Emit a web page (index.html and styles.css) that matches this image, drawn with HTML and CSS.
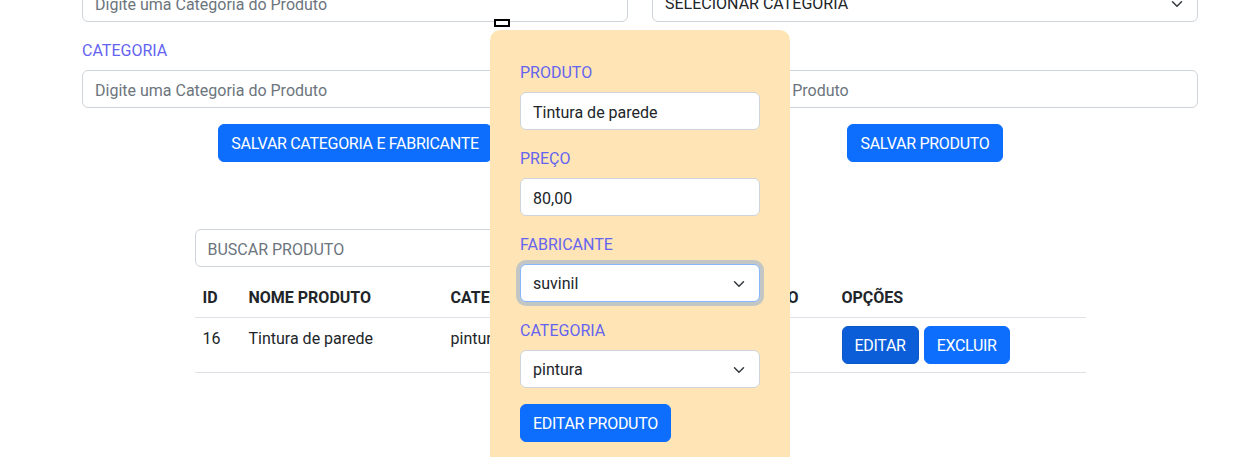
FILE: index.html
```html
<!DOCTYPE html>
<html lang="pt-BR">
<head>
<meta charset="utf-8">
<title>Produtos</title>
<link rel="stylesheet" href="styles.css">
</head>
<body>
<div class="page">
  <div class="container">
    <div class="forms">
      <div class="col">
        <label class="lbl">FABRICANTE</label>
        <input class="field" type="text" placeholder="Digite uma Categoria do Produto">
        <label class="lbl">CATEGORIA</label>
        <input class="field" type="text" placeholder="Digite uma Categoria do Produto">
        <div class="actions"><button class="btn">SALVAR CATEGORIA E FABRICANTE</button></div>
      </div>
      <div class="col">
        <label class="lbl">CATEGORIA</label>
        <div class="field select"><span>SELECIONAR CATEGORIA</span><svg class="chev" viewBox="0 0 16 16" width="12" height="12"><path d="M2 5l6 6 6-6" fill="none" stroke="#343a40" stroke-width="2" stroke-linecap="round" stroke-linejoin="round"/></svg></div>
        <label class="lbl">PRODUTO</label>
        <input class="field" type="text" placeholder="Digite o Nome do Produto">
        <div class="actions"><button class="btn">SALVAR PRODUTO</button></div>
      </div>
    </div>

    <div class="list">
      <input class="field search" type="text" placeholder="BUSCAR PRODUTO">
      <table class="table">
        <colgroup>
          <col class="c-id"><col class="c-nome"><col class="c-cat"><col class="c-fab"><col class="c-preco"><col class="c-op">
        </colgroup>
        <thead>
          <tr><th>ID</th><th>NOME PRODUTO</th><th>CATEGORIA</th><th>FABRICANTE</th><th>PREÇO</th><th>OPÇÕES</th></tr>
        </thead>
        <tbody>
          <tr>
            <td>16</td><td>Tintura de parede</td><td>pintura</td><td>suvinil</td><td>80,00</td>
            <td><div class="row-actions"><button class="btn btn-hover">EDITAR</button><button class="btn">EXCLUIR</button></div></td>
          </tr>
        </tbody>
      </table>
    </div>
  </div>

  <span class="marker"></span>

  <div class="modal">
    <label class="lbl">PRODUTO</label>
    <input class="field" type="text" value="Tintura de parede">
    <label class="lbl">PREÇO</label>
    <input class="field" type="text" value="80,00">
    <label class="lbl">FABRICANTE</label>
    <div class="field select focus"><span>suvinil</span><svg class="chev" viewBox="0 0 16 16" width="12" height="12"><path d="M2 5l6 6 6-6" fill="none" stroke="#343a40" stroke-width="2" stroke-linecap="round" stroke-linejoin="round"/></svg></div>
    <label class="lbl">CATEGORIA</label>
    <div class="field select"><span>pintura</span><svg class="chev" viewBox="0 0 16 16" width="12" height="12"><path d="M2 5l6 6 6-6" fill="none" stroke="#343a40" stroke-width="2" stroke-linecap="round" stroke-linejoin="round"/></svg></div>
    <div class="modal-actions"><button class="btn">EDITAR PRODUTO</button></div>
  </div>
</div>
</body>
</html>
```

FILE: styles.css
```css
* { box-sizing: border-box; }
html, body { margin: 0; padding: 0; height: 100%; overflow: hidden; background: #fff; }
body {
  font-family: "Segoe UI", Roboto, "Liberation Sans", sans-serif;
  font-size: 16px;
  line-height: 1.5;
  color: #212529;
}
.page {
  position: relative;
  display: flow-root;
  width: 1240px;
  height: 457px;
  overflow: hidden;
}
.container {
  width: 1116px;
  margin: -48px 0 0 82px;
}
.forms {
  display: grid;
  grid-template-columns: 546px 546px;
  column-gap: 24px;
}
.col { display: flex; flex-direction: column; }
.lbl {
  display: block;
  color: #6464f0;
  line-height: 24px;
  padding-top: 1px;
  margin-bottom: 7px;
}
.field {
  display: block;
  width: 100%;
  height: 38px;
  padding: 7px 12px 5px;
  font: inherit;
  line-height: 24px;
  color: #212529;
  background: #fff;
  border: 1px solid #ced4da;
  border-radius: 6px;
  margin: 0 0 16px 0;
  outline: none;
}
.field::placeholder { color: #6c757d; opacity: 1; }
.select {
  display: flex;
  align-items: center;
  justify-content: space-between;
}
.chev { flex: none; margin-right: 2px; }
.focus {
  border-color: #86b7fe;
  box-shadow: 0 0 0 4px rgba(13, 110, 253, .25);
}
.actions { display: flex; justify-content: center; }
.btn {
  font: inherit;
  line-height: 24px;
  letter-spacing: -0.3px;
  padding: 7px 12px 5px;
  color: #fff;
  background: #0d6efd;
  border: 1px solid #0d6efd;
  border-radius: 6px;
  cursor: pointer;
}
.btn-hover { background: #0b5ed7; border-color: #0a58ca; }

.list {
  width: 891px;
  margin: 67px auto 0;
}
.search {
  width: 400px;
  margin-bottom: 10px;
}
.table {
  width: 100%;
  border-collapse: collapse;
  table-layout: fixed;
}
.c-id { width: 46px; }
.c-nome { width: 202px; }
.c-cat { width: 150px; }
.c-fab { width: 147px; }
.c-preco { width: 94px; }
.c-op { width: 252px; }
.table th, .table td {
  text-align: left;
  vertical-align: top;
  padding: 9px 8px 7px;
  border-bottom: 1px solid #dee2e6;
  white-space: nowrap;
}
.table td { padding: 8px; }
.table td:not(:last-child) { padding-top: 9px; padding-bottom: 7px; }
.table th { font-weight: 700; }
.row-actions { display: flex; gap: 5px; }

.marker {
  position: absolute;
  left: 494px;
  top: 19px;
  width: 16px;
  height: 8px;
  border: 2px solid #000;
  background: #fff;
}
.modal {
  position: absolute;
  left: 490px;
  top: 30px;
  width: 300px;
  height: 460px;
  padding: 30px;
  background: #ffe4b5;
  border-radius: 10px;
}
.modal .field { width: 240px; }
.modal-actions { display: flex; }
```
